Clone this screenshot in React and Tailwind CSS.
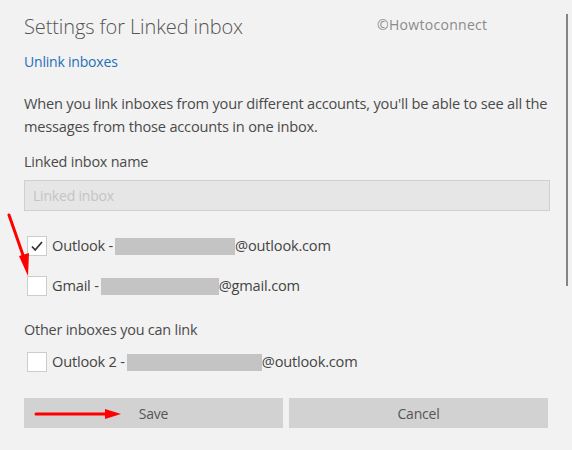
import React from 'react';

const Checkbox = ({ checked }) => (
  <div className="w-5 h-5 bg-white border border-[#cccccc] flex items-center justify-center shrink-0">
    {checked && (
      <svg width="14" height="14" viewBox="0 0 14 14">
        <path d="M2 7.5 L5.2 11 L12 3" fill="none" stroke="#333333" strokeWidth="1.8" />
      </svg>
    )}
  </div>
);

const AccountRow = ({ checked, name, blur, domain, className }) => (
  <div className={`flex items-center ${className}`}>
    <div className="ml-[3px]">
      <Checkbox checked={checked} />
    </div>
    <span className="ml-[5px] mr-[2px] text-[14.6px] tracking-[-0.2px] text-[#444444]">{name} -</span>
    <span className="inline-block h-[17px] bg-[#c4c4c4]" style={{ width: blur }}></span>
    <span className="text-[14.6px] tracking-[-0.2px] text-[#444444]">{domain}</span>
  </div>
);

export default function App() {
  return (
    <div
      className="relative w-[572px] h-[450px] bg-[#f2f2f2] overflow-hidden tracking-[-0.2px]"
      style={{ fontFamily: '"Open Sans", "Noto Sans", sans-serif' }}
    >
      <div className="pl-6 pr-[16px] pt-[13px] flex flex-col">
        <h1 className="text-[20px] leading-[28px] font-light tracking-[-0.1px] text-[#555555]">Settings for Linked inbox</h1>
        <a className="mt-[11px] text-[14px] leading-5 text-[#1f6fb9]">Unlink inboxes</a>
        <p className="mt-[20px] text-[14.6px] leading-[23px] text-[#4a4a4a]">
          When you link inboxes from your different accounts, you'll be able to see all the messages from those accounts in one inbox.
        </p>
        <div className="mt-[14px] text-[14.4px] leading-5 text-[#4a4a4a]">Linked inbox name</div>
        <div className="mt-2 h-[31px] w-[526px] bg-[#e6e6e6] border border-[#d0d0d0] flex items-center px-2 text-[14px] text-[#c4c4c4]">
          Linked inbox
        </div>
        <AccountRow className="mt-[25px] h-5" checked name="Outlook" blur="120px" domain="@outlook.com" />
        <AccountRow className="mt-5 h-5" name="Gmail" blur="118px" domain="@gmail.com" />
        <div className="mt-[24px] text-[14.4px] leading-5 text-[#4a4a4a]">Other inboxes you can link</div>
        <AccountRow className="mt-3 h-5" name="Outlook 2" blur="135px" domain="@outlook.com" />
        <div className="mt-[26px] flex gap-[6px]">
          <button className="w-[259px] h-[30px] bg-[#d2d2d2] text-[14px] text-[#555555]">Save</button>
          <button className="w-[259px] h-[30px] bg-[#d2d2d2] text-[14px] text-[#555555]">Cancel</button>
        </div>
      </div>

      <div className="absolute left-[377px] top-[14px] text-[14px] tracking-[0.3px] text-[#8a8a8a]">©Howtoconnect</div>
      <div className="absolute left-[566px] top-[14px] w-[2px] h-[272px] bg-[#858585]"></div>

      <svg className="absolute left-0 top-0 pointer-events-none" width="572" height="450">
        <line x1="9" y1="215" x2="24" y2="258" stroke="#ff0000" strokeWidth="3" strokeLinecap="round" />
        <polygon points="19,256 29,253 28,276" fill="#ff0000" />
        <line x1="36" y1="414" x2="108" y2="414" stroke="#ff0000" strokeWidth="3" strokeLinecap="round" />
        <polygon points="105,409 121,414 105,419" fill="#ff0000" />
      </svg>
    </div>
  );
}
